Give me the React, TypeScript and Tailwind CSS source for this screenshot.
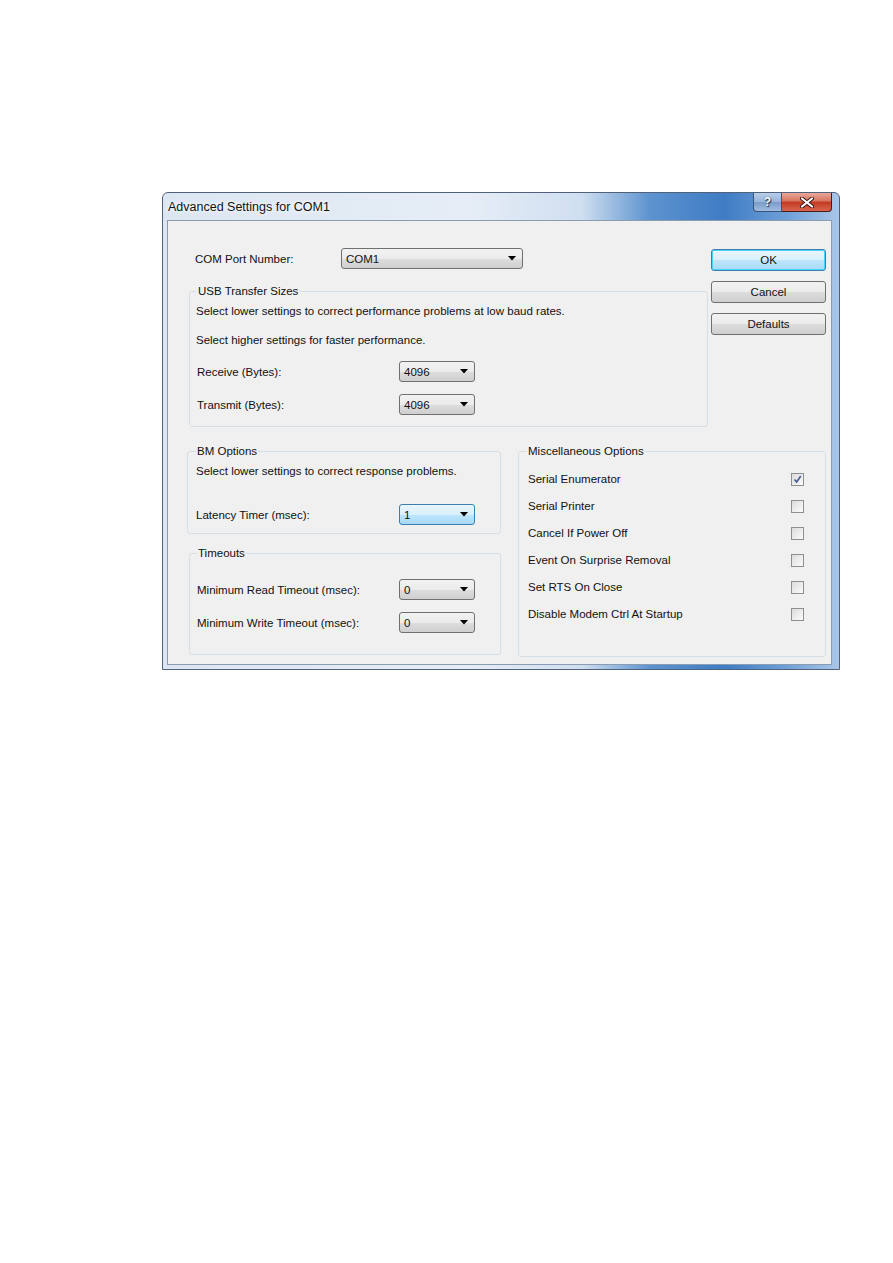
import React from "react";

type ComboProps = { value: string; width: string; focused?: boolean };

const Arrow = () => (
    <svg width="8" height="5" viewBox="0 0 8 5" className="shrink-0">
        <polygon points="0,0 8,0 4,4.5" fill="#000" />
    </svg>
);

const Combo = ({ value, width, focused }: ComboProps) => {
    const skin = focused
        ? "border-[#3c7fb1] bg-[linear-gradient(to_bottom,#eaf6fd_0%,#d9f0fc_50%,#bee6fd_51%,#a7d9f5_100%)]"
        : "border-[#707070] bg-[linear-gradient(to_bottom,#f2f2f2_0%,#ebebeb_50%,#dddddd_51%,#cfcfcf_100%)]";
    return (
        <div className={`${width} h-[21px] flex items-center justify-between pl-[4px] pr-[6px] border rounded-[3px] ${skin}`}>
            <span>{value}</span>
            <Arrow />
        </div>
    );
};

const Button = ({ label, primary }: { label: string; primary?: boolean }) => (
    <div
        className={
            primary
                ? "h-[22px] w-[115px] flex items-center justify-center rounded-[3px] border border-[#3c7fb1] shadow-[inset_0_0_0_1px_#48d3fa] bg-[linear-gradient(to_bottom,#eaf6fd_0%,#d9f0fc_50%,#bee6fd_51%,#a7d9f5_100%)]"
                : "h-[22px] w-[115px] flex items-center justify-center rounded-[3px] border border-[#707070] bg-[linear-gradient(to_bottom,#f2f2f2_0%,#ebebeb_50%,#dddddd_51%,#cfcfcf_100%)]"
        }
    >
        {label}
    </div>
);

const CheckBox = ({ checked }: { checked?: boolean }) => (
    <div className="w-[13px] h-[13px] border border-[#8e8f8f] bg-[linear-gradient(135deg,#dcdcdc_0%,#fbfbfb_100%)] flex items-center justify-center">
        {checked && (
            <svg width="9" height="9" viewBox="0 0 9 9">
                <path d="M1.5 4.5 L3.6 7 L7.8 1" stroke="#4a5f97" strokeWidth="1.7" fill="none" />
            </svg>
        )}
    </div>
);

const miscOptions = [
    { label: "Serial Enumerator", checked: true },
    { label: "Serial Printer", checked: false },
    { label: "Cancel If Power Off", checked: false },
    { label: "Event On Surprise Removal", checked: false },
    { label: "Set RTS On Close", checked: false },
    { label: "Disable Modem Ctrl At Startup", checked: false },
];

const App = () => {
    return (
        <div className="min-h-[1263px] w-[893px] bg-white pt-[192px] pl-[162px] text-[11.5px] leading-[14px] text-[#111] font-['Liberation_Sans',Arial,sans-serif]">
            <div className="w-[678px] h-[478px] flex flex-col rounded-t-[6px] border border-[#52617a] bg-[linear-gradient(to_right,#dce6f2_0%,#e6edf6_45%,#cfdef0_62%,#5d93cf_72%,#3f7cc4_83%,#6d9fd7_92%,#a9c6e8_100%)]">
                {/* title bar */}
                <div className="h-[27px] flex items-start">
                    <div className="pl-[5px] pt-[7px] text-[12.5px] leading-[14px] [text-shadow:0_0_6px_#ffffff,0_0_3px_#ffffff]">
                        Advanced Settings for COM1
                    </div>
                    <div className="ml-auto mr-[7px] flex">
                        <div className="w-[29px] h-[19px] rounded-bl-[4px] border border-t-0 border-[#3b5376] bg-[linear-gradient(to_bottom,#b9cde6_0%,#98b4d8_50%,#7b9cc7_51%,#9fbde0_100%)] flex items-center justify-center">
                            <span className="text-white font-bold text-[12px] leading-[12px] [text-shadow:0_0_1px_#1d2f4e,1px_1px_1px_#1d2f4e]">?</span>
                        </div>
                        <div className="w-[50px] h-[19px] rounded-br-[4px] border border-t-0 border-l-0 border-[#4a1a16] bg-[linear-gradient(to_bottom,#e8a89b_0%,#d7735f_45%,#c23a22_50%,#d8654f_100%)] flex items-center justify-center">
                            <svg width="14" height="11" viewBox="0 0 14 11">
                                <path d="M2 1.5 L12 9.5 M12 1.5 L2 9.5" stroke="#3a1410" strokeWidth="4" strokeLinecap="round" />
                                <path d="M2 1.5 L12 9.5 M12 1.5 L2 9.5" stroke="#ffffff" strokeWidth="2.2" strokeLinecap="round" />
                            </svg>
                        </div>
                    </div>
                </div>

                {/* client area */}
                <div className="ml-[4px] mr-[7px] h-[445px] border border-[#8b9bb0] bg-[#f0f0f0] pl-[21px]">
                    {/* top part */}
                    <div className="flex">
                        <div className="w-[519px]">
                            <div className="mt-[27px] h-[21px] flex items-center pl-[6px]">
                                <span className="w-[146px]">COM Port Number:</span>
                                <Combo value="COM1" width="w-[182px]" />
                            </div>
                            <fieldset className="mt-[15px] border border-[#d5dfe5] rounded-[3px] px-[6px] pb-[11px]">
                                <legend className="px-[2px] leading-[14px]">USB Transfer Sizes</legend>
                                <div className="mt-[6px] h-[14px]">Select lower settings to correct performance problems at low baud rates.</div>
                                <div className="mt-[15px] h-[14px]">Select higher settings for faster performance.</div>
                                <div className="mt-[14px] h-[21px] flex items-center">
                                    <span className="w-[203px] pl-[1px]">Receive (Bytes):</span>
                                    <Combo value="4096" width="w-[76px]" />
                                </div>
                                <div className="mt-[12px] h-[21px] flex items-center">
                                    <span className="w-[203px] pl-[1px]">Transmit (Bytes):</span>
                                    <Combo value="4096" width="w-[76px]" />
                                </div>
                            </fieldset>
                        </div>
                        <div className="ml-[3px] mt-[28px] flex flex-col gap-[10px]">
                            <Button label="OK" primary />
                            <Button label="Cancel" />
                            <Button label="Defaults" />
                        </div>
                    </div>

                    {/* bottom part */}
                    <div className="mt-[17px] flex">
                        <div className="w-[314px] -ml-[2px]">
                            <fieldset className="border border-[#d5dfe5] rounded-[3px] px-[8px] pb-[8px]">
                                <legend className="px-[1px] leading-[14px]">BM Options</legend>
                                <div className="mt-[6px] h-[14px]">Select lower settings to correct response problems.</div>
                                <div className="mt-[26px] h-[21px] flex items-center">
                                    <span className="w-[203px]">Latency Timer (msec):</span>
                                    <Combo value="1" width="w-[76px]" focused />
                                </div>
                            </fieldset>
                            <fieldset className="mt-[12px] ml-[2px] border border-[#d5dfe5] rounded-[3px] px-[7px] pb-[21px]">
                                <legend className="px-[1px] leading-[14px]">Timeouts</legend>
                                <div className="mt-[19px] h-[21px] flex items-center">
                                    <span className="w-[202px]">Minimum Read Timeout (msec):</span>
                                    <Combo value="0" width="w-[76px]" />
                                </div>
                                <div className="mt-[12px] h-[21px] flex items-center">
                                    <span className="w-[202px]">Minimum Write Timeout (msec):</span>
                                    <Combo value="0" width="w-[76px]" />
                                </div>
                            </fieldset>
                        </div>
                        <fieldset className="ml-[17px] w-[308px] h-[213px] border border-[#d5dfe5] rounded-[3px] pl-[8px] pr-[21px]">
                            <legend className="px-[1px] leading-[14px]">Miscellaneous Options</legend>
                            <div className="mt-[14px] flex flex-col gap-[13px]">
                                {miscOptions.map((opt) => (
                                    <div key={opt.label} className="h-[14px] flex items-center justify-between">
                                        <span className="pl-[1px]">{opt.label}</span>
                                        <CheckBox checked={opt.checked} />
                                    </div>
                                ))}
                            </div>
                        </fieldset>
                    </div>
                </div>
            </div>
        </div>
    );
};

export default App;
